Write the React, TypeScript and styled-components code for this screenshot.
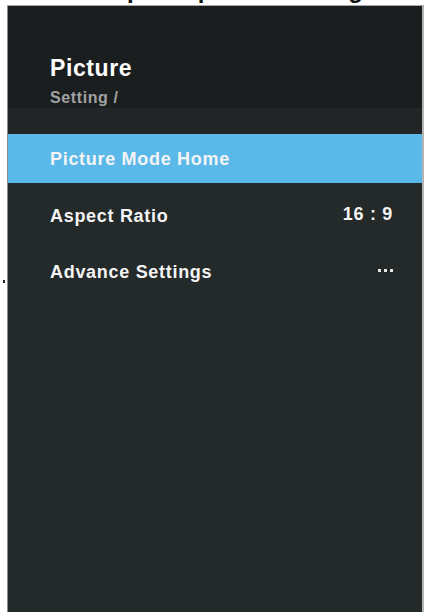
import styled, { createGlobalStyle } from "styled-components";

const GlobalStyle = createGlobalStyle`
  html, body {
    margin: 0;
    padding: 0;
    background: #ffffff;
  }
  body {
    font-family: "Liberation Sans", Arial, sans-serif;
  }
`;

const Page = styled.div`
  width: 426px;
  height: 612px;
  overflow: hidden;
  display: flex;
  flex-direction: column;
  background: #ffffff;
`;

const Caption = styled.div`
  height: 5px;
  overflow: hidden;
  flex-shrink: 0;

  p {
    margin: -22px 0 0 0;
    font: bold 24px/1 "Liberation Sans", Arial, sans-serif;
    color: #111111;
    text-align: center;
    white-space: nowrap;
  }
`;

const Frame = styled.div`
  flex: 1;
  display: flex;
  padding: 0 2px 0 7px;
`;

const Panel = styled.div`
  position: relative;
  flex: 1;
  display: flex;
  flex-direction: column;
  background: #242929;
  border-top: 1px solid #a8a8a8;
  border-left: 1px solid #8a8a8a;
  border-right: 2px solid #b4b4b4;

  &::before {
    content: "";
    position: absolute;
    left: -5px;
    top: 274px;
    width: 2px;
    height: 3px;
    background: #222222;
  }
`;

const Header = styled.div`
  height: 128px;
  flex-shrink: 0;
  display: flex;
  flex-direction: column;
  padding: 51px 0 0 42px;
  box-sizing: border-box;
  background: linear-gradient(to bottom, #1b1e1e 0, #1b1e1e 102px, #212525 102px, #212525 100%);
`;

const Title = styled.h1`
  margin: 0;
  font: bold 23px/1 "Liberation Sans", Arial, sans-serif;
  letter-spacing: 0.6px;
  color: #ffffff;
`;

const Crumb = styled.div`
  margin-top: 10px;
  font: bold 16px/1 "Liberation Sans", Arial, sans-serif;
  letter-spacing: 0.6px;
  color: #a2a2a2;
`;

const Menu = styled.ul`
  list-style: none;
  margin: 0;
  padding: 0;
  display: flex;
  flex-direction: column;
`;

const Row = styled.li<{ $active?: boolean }>`
  display: flex;
  align-items: center;
  justify-content: space-between;
  height: ${(p) => (p.$active ? "49px" : "56px")};
  margin-bottom: ${(p) => (p.$active ? "5px" : "0")};
  padding: 0 29px 0 42px;
  background: ${(p) => (p.$active ? "#5bb9ea" : "transparent")};
  font: bold 18px/1 "Liberation Sans", Arial, sans-serif;
  letter-spacing: 0.7px;
  color: #f4f4f4;
`;

const Value = styled.span<{ $raise?: number }>`
  margin-bottom: ${(p) => p.$raise ?? 0}px;
  color: #f4f4f4;
`;

const Ellipsis = styled.span`
  display: flex;
  gap: 3px;
  margin-bottom: 3px;

  i {
    width: 3px;
    height: 3px;
    background: #e8e8e8;
  }
`;

export default function App() {
  return (
    <>
      <GlobalStyle />
      <Page>
        <Caption>
          <p>Example of picture setting</p>
        </Caption>
        <Frame>
          <Panel>
            <Header>
              <Title>Picture</Title>
              <Crumb>Setting /</Crumb>
            </Header>
            <Menu>
              <Row $active>
                <span>Picture Mode Home</span>
              </Row>
              <Row>
                <span>Aspect Ratio</span>
                <Value $raise={5}>16 : 9</Value>
              </Row>
              <Row>
                <span>Advance Settings</span>
                <Ellipsis>
                  <i />
                  <i />
                  <i />
                </Ellipsis>
              </Row>
            </Menu>
          </Panel>
        </Frame>
      </Page>
    </>
  );
}
